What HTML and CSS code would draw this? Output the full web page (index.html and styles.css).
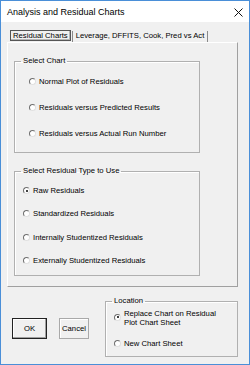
FILE: index.html
```html
<html>
<head>
    <link rel="stylesheet" href="styles.css">
</head>
<body>

<div class="window">

    <div class="titlebar">
        <span class="title">Analysis and Residual Charts</span>
        <svg class="close" width="9" height="9" viewBox="0 0 9 9">
            <path d="M0.5 0.5 L8.5 8.5 M8.5 0.5 L0.5 8.5" stroke="#111" stroke-width="1" fill="none"/>
        </svg>
    </div>

    <div class="client">

        <div class="tabs">
            <div class="tab active">Residual Charts</div>
            <div class="tab">Leverage, DFFITS, Cook, Pred vs Act</div>
        </div>

        <div class="page">

            <fieldset class="frame frame-chart">
                <legend>Select Chart</legend>
                <div class="options">
                    <div class="option"><span class="radio"></span>Normal Plot of Residuals</div>
                    <div class="option"><span class="radio"></span>Residuals versus Predicted Results</div>
                    <div class="option"><span class="radio"></span>Residuals versus Actual Run Number</div>
                </div>
            </fieldset>

            <fieldset class="frame frame-type">
                <legend>Select Residual Type to Use</legend>
                <div class="options">
                    <div class="option"><span class="radio checked"></span>Raw Residuals</div>
                    <div class="option"><span class="radio"></span>Standardized Residuals</div>
                    <div class="option"><span class="radio"></span>Internally Studentized Residuals</div>
                    <div class="option"><span class="radio"></span>Externally Studentized Residuals</div>
                </div>
            </fieldset>

        </div>

        <div class="footer">
            <div class="buttons">
                <button class="btn btn-default">OK</button>
                <button class="btn btn-cancel">Cancel</button>
            </div>

            <fieldset class="frame frame-location">
                <legend>Location</legend>
                <div class="options">
                    <div class="option option-wrap"><span class="radio checked"></span><span>Replace Chart on Residual<br>Plot Chart Sheet</span></div>
                    <div class="option option-last"><span class="radio"></span>New Chart Sheet</div>
                </div>
            </fieldset>
        </div>

    </div>

</div>

</body>
</html>
```

FILE: styles.css
```css
body{
    margin: 0;
    font-family: "Liberation Sans", Arial, sans-serif;
    font-size: 7.7px;
    color: #000;
}
.window{
    width: 250px;
    height: 365px;
    box-sizing: border-box;
    border: 1px solid #4a8fd8;
    background-color: #f0f0f0;
    display: flex;
    flex-direction: column;
}
.titlebar{
    height: 21px;
    background-color: #fff;
    display: flex;
    align-items: center;
    justify-content: space-between;
    padding: 0 6px 0 6px;
}
.title{
    font-size: 9px;
}
.close{
    display: block;
    margin-top: 1px;
}
.client{
    flex: 1;
    display: flex;
    flex-direction: column;
}

/* tab strip */
.tabs{
    display: flex;
    height: 12px;
    margin: 8px 0 0 8px;
}
.tab{
    box-sizing: border-box;
    padding: 0 3px;
    line-height: 10px;
    border-left: 1px solid #8a8a8a;
    border-right: 1px solid #8a8a8a;
    margin-top: 1px;
}
.tab.active{
    margin: 0 1px 1px 1px;
    padding: 0 2px;
    border: 1px solid #555;
    box-shadow: inset -1px -1px 0 #b5b5b5;
}
.page{
    box-sizing: border-box;
    width: 231px;
    height: 245px;
    margin-left: 6px;
    border-top: 1px solid #fff;
    border-left: 1px solid #fff;
    border-right: 1px solid #a0a0a0;
    border-bottom: 1px solid #a0a0a0;
    padding: 13px 0 0 6px;
}

/* group boxes */
.frame{
    margin: 0;
    padding: 0;
    min-width: 0;
    border: 1px solid #b0b0b0;
    box-shadow: inset 1px 1px 0 #fff;
}
.frame legend{
    padding: 0 2px;
    margin-left: 6px;
    line-height: 10px;
}
.frame-chart{
    width: 186px;
    box-sizing: border-box;
}
.frame-chart .options{
    padding: 2px 0 6px 14px;
}
.frame-chart .option{
    height: 26px;
}
.frame-type{
    width: 186px;
    box-sizing: border-box;
    margin-top: 13px;
}
.frame-type .options{
    padding: 3px 0 3px 8px;
}
.frame-type .option{
    height: 23.3px;
}
.option{
    display: flex;
    align-items: center;
}
.radio{
    box-sizing: border-box;
    width: 7px;
    height: 7px;
    border-radius: 50%;
    background-color: #fff;
    border: 1px solid;
    border-color: #6f6f6f #e0e0e0 #e0e0e0 #6f6f6f;
    margin-right: 3px;
    flex-shrink: 0;
    position: relative;
}
.radio.checked::after{
    content: "";
    position: absolute;
    left: 1.5px;
    top: 1.5px;
    width: 2px;
    height: 2px;
    border-radius: 50%;
    background-color: #000;
}

/* bottom area */
.footer{
    display: flex;
    align-items: flex-start;
}
.buttons{
    display: flex;
    margin: 31px 0 0 11px;
}
.btn{
    box-sizing: border-box;
    height: 21px;
    padding: 0;
    font-family: "Liberation Sans", Arial, sans-serif;
    font-size: 7.7px;
    color: #000;
    background-color: #f0f0f0;
    border: 1px solid #a9a9a9;
    box-shadow: inset 1px 1px 0 #fff;
}
.btn-default{
    width: 35px;
    border: 1px solid #222;
    box-shadow: inset -1px -1px 0 #a0a0a0, inset 1px 1px 0 #fff;
}
.btn-cancel{
    width: 30px;
    margin-left: 12px;
}
.frame-location{
    width: 133px;
    box-sizing: border-box;
    margin: 9px 0 0 16px;
}
.frame-location .options{
    padding: 3px 0 8px 8px;
    line-height: 9px;
}
.option-wrap .radio{
    margin-top: -2px;
}
.option-last{
    margin-top: 12px;
}
```
